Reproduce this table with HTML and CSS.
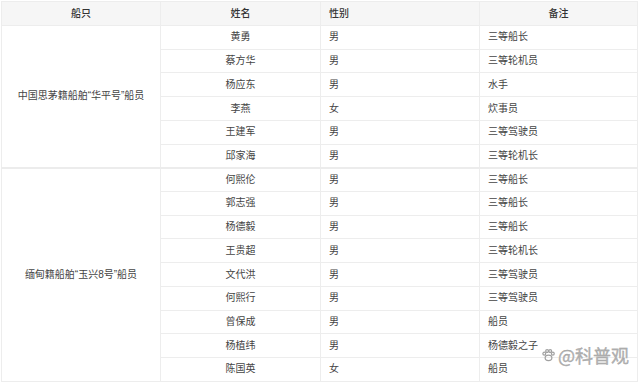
FILE: index.html
```html
<!DOCTYPE html>
<html lang="zh">
<head>
<meta charset="utf-8">
<link rel="stylesheet" href="styles.css">
</head>
<body>
<div class="wrap">
<table class="crew">
<colgroup><col class="c1"><col class="c2"><col class="c3"><col class="c4"></colgroup>
<thead>
<tr><th class="ctr">船只</th><th class="ctr">姓名</th><th class="lft">性别</th><th class="ctr">备注</th></tr>
</thead>
<tbody class="grp">
<tr><td class="ship" rowspan="6">中国思茅籍船舶“华平号”船员</td><td class="ctr">黄勇</td><td>男</td><td>三等船长</td></tr>
<tr><td class="ctr">蔡方华</td><td>男</td><td>三等轮机员</td></tr>
<tr><td class="ctr">杨应东</td><td>男</td><td>水手</td></tr>
<tr><td class="ctr">李燕</td><td>女</td><td>炊事员</td></tr>
<tr><td class="ctr">王建军</td><td>男</td><td>三等驾驶员</td></tr>
<tr><td class="ctr">邱家海</td><td>男</td><td>三等轮机长</td></tr>
</tbody>
<tbody class="grp">
<tr><td class="ship" rowspan="9">缅甸籍船舶“玉兴8号”船员</td><td class="ctr">何熙伦</td><td>男</td><td>三等船长</td></tr>
<tr><td class="ctr">郭志强</td><td>男</td><td>三等船长</td></tr>
<tr><td class="ctr">杨德毅</td><td>男</td><td>三等船长</td></tr>
<tr><td class="ctr">王贵超</td><td>男</td><td>三等轮机长</td></tr>
<tr><td class="ctr">文代洪</td><td>男</td><td>三等驾驶员</td></tr>
<tr><td class="ctr">何熙行</td><td>男</td><td>三等驾驶员</td></tr>
<tr><td class="ctr">曾保成</td><td>男</td><td>船员</td></tr>
<tr><td class="ctr">杨植纬</td><td>男</td><td>杨德毅之子</td></tr>
<tr><td class="ctr">陈国英</td><td>女</td><td>船员</td></tr>
</tbody>
</table>
<div class="mark">
<svg class="logo" viewBox="0 0 16 16" width="15" height="15" aria-hidden="true">
<g fill="none" stroke="#a0a0a0" stroke-width="1.3">
<ellipse cx="8" cy="10.5" rx="3.6" ry="3"/>
<circle cx="3.5" cy="6" r="1.5"/>
<circle cx="6.5" cy="3.2" r="1.5"/>
<circle cx="9.8" cy="3.2" r="1.5"/>
<circle cx="12.6" cy="6" r="1.5"/>
</g>
</svg>
<span class="mtext">@科普观</span>
</div>
</div>
</body>
</html>
```
FILE: styles.css
```css
html, body {
  margin: 0;
  padding: 0;
  background: #ffffff;
}
body {
  font-family: "Liberation Sans", "Noto Sans CJK SC", sans-serif;
  font-size: 10px;
  color: #444444;
}
.wrap {
  position: relative;
  padding: 1px 0 0 1px;
  width: 636px;
}
.crew {
  border-collapse: collapse;
  table-layout: fixed;
  width: 636px;
  border: 1px solid #ececec;
}
.c1 { width: 159px; }
.c2 { width: 160px; }
.c3 { width: 159px; }
.c4 { width: 158px; }
th, td {
  border: 1px solid #ededed;
  padding: 0 0 0 8px;
  text-align: left;
  vertical-align: middle;
  line-height: 12px;
  white-space: nowrap;
}
thead tr {
  height: 24px;
  background: #f6f6f6;
}
th {
  font-weight: 500;
  color: #333333;
}
tbody tr {
  height: 23.73px;
}
.ctr {
  text-align: center;
  padding: 0;
}
.lft {
  text-align: left;
}
.ship {
  text-align: center;
  padding: 0;
  background: #ffffff;
}
.grp + .grp tr:first-child td {
  border-top: 2px solid #ececec;
}
.mark {
  position: absolute;
  left: 541px;
  top: 345px;
  display: flex;
  align-items: center;
  gap: 2px;
}
.mtext {
  font-family: "Noto Sans CJK SC", sans-serif;
  font-size: 18px;
  line-height: 20px;
  color: #b4b4b4;
  -webkit-text-stroke: 0.3px #9a9a9a;
  text-shadow: 0 0 1px #ffffff, 0 0 1px #ffffff;
}
.logo {
  display: block;
}
```
